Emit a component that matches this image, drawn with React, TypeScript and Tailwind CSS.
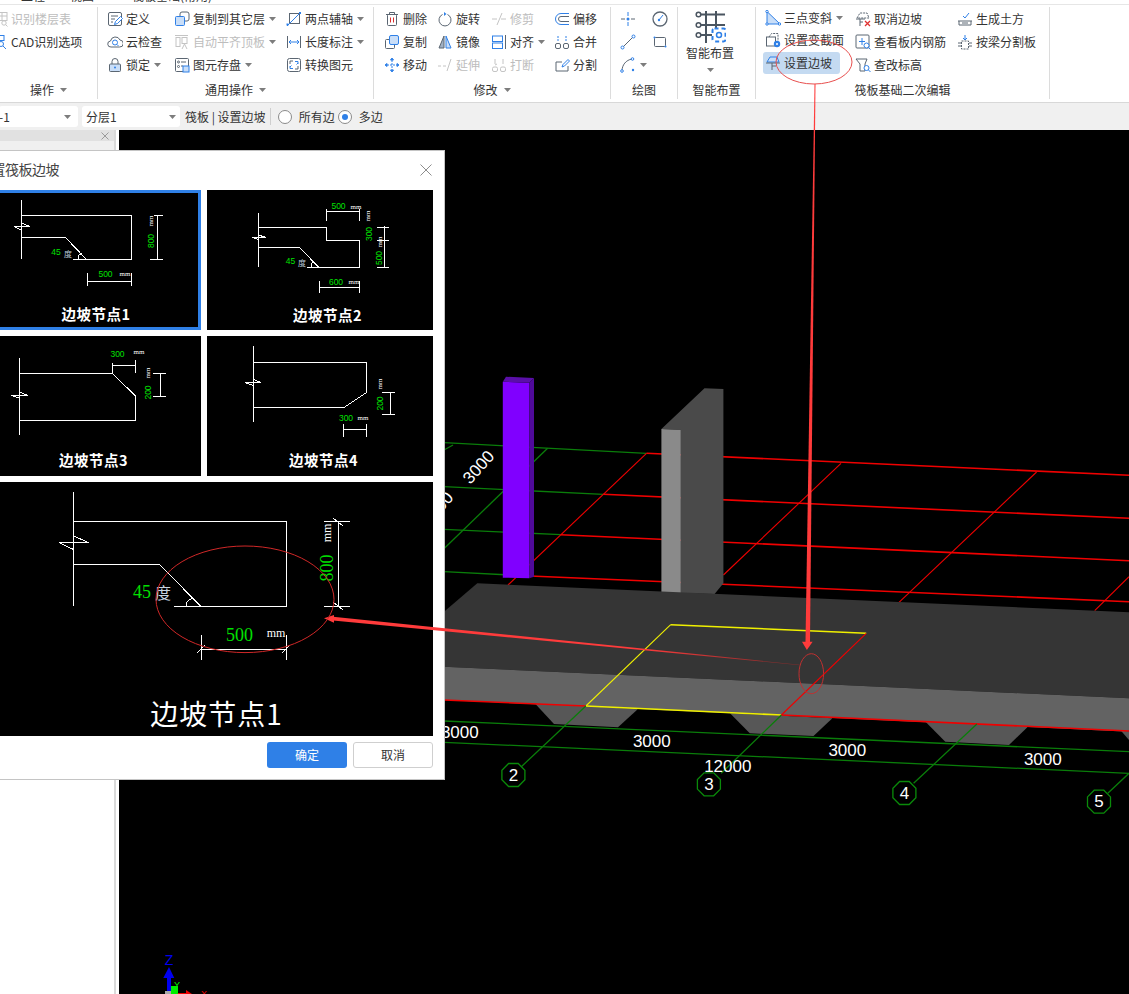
import React from 'react';

const D = '#5b6672';
const B = '#2f80e7';
const L = '#c9def8';
const G = '#c4c4c4';
const CJK = '"Noto Sans CJK SC", sans-serif';
const GREEN = '#00e000';

function Svg({ children, stroke = D }: { children: React.ReactNode; stroke?: string }) {
  return (
    <svg width="16" height="16" viewBox="0 0 16 16" fill="none" stroke={stroke} strokeWidth="1" className="shrink-0">
      {children}
    </svg>
  );
}

const Lens = ({ x = 11, y = 11 }: { x?: number; y?: number }) => (
  <g stroke={B}>
    <circle cx={x} cy={y} r="2.5" fill="#fff" />
    <path d={`M${x + 2} ${y + 2}l2 2`} />
  </g>
);

const icons: Record<string, React.ReactNode> = {
  floor: <Svg stroke={G}><rect x="6" y="1.5" width="9" height="8" /><path d="M6 5h9M10 1.5v8" /><circle cx="12" cy="12" r="2.2" /><path d="M13.5 13.5l2 2" /></Svg>,
  cad: <Svg stroke={B}><rect x="7" y="1.5" width="5" height="5" /><circle cx="9" cy="10" r="2.5" /><path d="M11 12l3 3" /><rect x="4" y="12" width="3" height="3" /></Svg>,
  define: <Svg><rect x="1.5" y="1.5" width="13" height="13" rx="1.5" /><path d="M4 5h7M4 8h4M4 11h2" /><path d="M7.5 13.5l1-3 5-5 2 2-5 5z" fill="#fff" stroke={B} /></Svg>,
  cloud: <Svg><path d="M4 13a3 3 0 0 1-.5-6 5 5 0 0 1 9.5-1 3.5 3.5 0 0 1-.5 7z" /><circle cx="8" cy="8.5" r="2.5" stroke={B} /><path d="M10 10.5l1.5 1.5" stroke={B} /></Svg>,
  lock: <Svg><path d="M5 7V4.5a3 3 0 0 1 6 0V7" /><rect x="2.5" y="7" width="11" height="7.5" rx="1" fill={L} /><circle cx="8" cy="10.5" r="1" fill={B} stroke="none" /></Svg>,
  copyTo: <Svg><rect x="6" y="1" width="9" height="9" rx="2" fill="#fff" /><rect x="1.5" y="5.5" width="9" height="9" rx="1" fill={L} stroke={B} /></Svg>,
  autoAlign: <Svg stroke={G}><path d="M1 1.5h13" /><rect x="2" y="3.5" width="4" height="9" /><rect x="8" y="3.5" width="5" height="6" /><path d="M8 15l2.5-5 2.5 5" /></Svg>,
  save: <Svg><rect x="1.5" y="1.5" width="13" height="13" rx="1" /><circle cx="4.5" cy="5" r="1" /><circle cx="4.5" cy="9.5" r="1" /><path d="M7 5h5M7 9h2" /><rect x="9" y="9" width="6" height="6" fill={L} stroke={B} /></Svg>,
  twoPoint: <Svg><rect x="3.5" y="2.5" width="10" height="10" /><path d="M1 15L15 1" stroke={B} /><rect x="0.5" y="12.5" width="2" height="2" fill={B} stroke="none" /><rect x="13" y="1" width="2" height="2" fill={B} stroke="none" /></Svg>,
  length: <Svg><path d="M1.5 2v12M14.5 2v12" /><path d="M3 8h10M5 6L3 8l2 2M11 6l2 2-2 2" stroke={B} /></Svg>,
  convert: <Svg><rect x="1.5" y="1.5" width="13" height="13" rx="2" /><path d="M4 7V4h3M12 9v3H9" /><path d="M9 4.5h3V7M10.5 7.5L12 6M7 11.5H4V9M5.5 8.5L4 10" stroke={B} /></Svg>,
  delete: <Svg><path d="M5.5 3V1.5h5V3M2 3.5h12" /><rect x="3.5" y="3.5" width="9" height="11" rx="1" /><path d="M6.5 6.5v5M9.5 6.5v5" stroke="#d83030" /></Svg>,
  rotate: <Svg><path d="M10.5 3.5a6 6 0 1 1-5 0" /><path d="M7 1l2.5 2L7 5z" fill={B} stroke="none" /></Svg>,
  trim: <Svg stroke={G}><path d="M1 8h5M10 8h5M11 2L6 14" /></Svg>,
  copy: <Svg><rect x="1.5" y="5.5" width="9" height="9" rx="1" fill="#fff" /><rect x="5.5" y="1.5" width="9" height="9" rx="1.5" fill={L} stroke={B} /></Svg>,
  mirror: <Svg><path d="M7 2L2 14h5z" fill="#9fb0c4" /><path d="M9 2l5 12H9z" fill={L} stroke={B} /></Svg>,
  extend: <Svg stroke={G}><path d="M1 9h3M6 9h3M14 2L10 14" /></Svg>,
  align: <Svg stroke={B}><rect x="1.5" y="2" width="10" height="5.5" /><rect x="1.5" y="9" width="10" height="5.5" /><path d="M14.5 1v14" stroke={D} /></Svg>,
  move: <Svg stroke={B}><path d="M8 3v10M3 8h10" strokeDasharray="2 1" /><path d="M6.5 3L8 1l1.5 2zM6.5 13L8 15l1.5-2zM3 6.5L1 8l2 1.5zM13 6.5L15 8l-2 1.5z" fill={B} /></Svg>,
  break: <Svg stroke={G}><rect x="1.5" y="10" width="5" height="4.5" rx="1.5" /><rect x="9.5" y="10" width="5" height="4.5" rx="1.5" /><path d="M4 2v5M12 2v5M6 7l-2 1" /></Svg>,
  offset: <Svg><path d="M15 2.5H7a5.5 5.5 0 0 0 0 11h8" stroke={B} /><path d="M15 5.5H7a2.5 2.5 0 0 0 0 5h8" /></Svg>,
  merge: <Svg><rect x="1.5" y="9.5" width="5" height="5" rx="1.5" /><rect x="9.5" y="9.5" width="5" height="5" rx="1.5" /><path d="M4 2v5M12 2v5" stroke={B} strokeDasharray="2 1" /></Svg>,
  split: <Svg><path d="M14 9v5H2V5h6" /><path d="M8 10l1-2.5 5-5 1.5 1.5-5 5z" stroke={B} /></Svg>,
  point: <Svg><path d="M1 8h4M11 8h4" /><path d="M8 1v4M8 11v4" stroke={B} /><circle cx="8" cy="8" r="1.5" fill={B} stroke="none" /></Svg>,
  circle: <Svg><circle cx="8" cy="8" r="7" strokeWidth="1.3" /><path d="M7 9l4-5" stroke={B} /><circle cx="7" cy="9" r="1.2" fill={B} stroke="none" /></Svg>,
  line: <Svg><path d="M3 13L13 3" /><circle cx="2.5" cy="13.5" r="1.5" fill="#fff" stroke={B} /><circle cx="13.5" cy="2.5" r="1.5" fill="#fff" stroke={B} /></Svg>,
  rect: <Svg><rect x="2.5" y="3.5" width="11" height="9" rx="1" /><circle cx="2.5" cy="3.5" r="1" fill={B} stroke="none" /><circle cx="13.5" cy="12.5" r="1" fill={B} stroke="none" /></Svg>,
  arc: <Svg><path d="M2 14C2 8 6 3 12 2" /><circle cx="2" cy="14" r="1.3" fill="#fff" stroke={B} /><circle cx="12.5" cy="2" r="1.3" fill="#fff" stroke={B} /><circle cx="13" cy="13" r="1.2" fill={B} stroke="none" /></Svg>,
  slope3: <Svg stroke={B}><path d="M2 1.5V14h13z" fill={L} /><circle cx="2" cy="1.5" r="1.2" fill="#fff" /><circle cx="2" cy="14" r="1.2" fill="#fff" /><circle cx="14.5" cy="14" r="1.2" fill="#fff" /></Svg>,
  section: <Svg><rect x="1.5" y="5" width="9" height="9" /><path d="M4 5l2.5-3.5H13V9" strokeDasharray="2 1" /><circle cx="12" cy="12" r="3.2" fill={B} stroke="none" /><circle cx="12" cy="12" r="1" fill="#fff" stroke="none" /></Svg>,
  slope: <Svg><path d="M2 7l3-5h7l2 5z" fill={L} stroke={B} /><path d="M1 8h14M7 8v7M7 11h4" /></Svg>,
  cancelSlope: <Svg><path d="M2 7l3-5h7l2 5z" strokeDasharray="2 1" /><path d="M1 8h9M5 8v7M5 11h3" /><path d="M10 10l5 5M15 10l-5 5" stroke="#e03030" strokeWidth="1.3" /></Svg>,
  rebar: <Svg><rect x="1" y="1" width="13" height="13" rx="1" /><path d="M7 4v7M4 7.5h6" stroke={B} /><Lens x={11.5} y={11.5} /></Svg>,
  elevation: <Svg><path d="M1 2h11l-2 5v7H5V7z" /><Lens x={11.5} y={11} /></Svg>,
  earth: <Svg><path d="M2 10v4h12v-4M1 10h14" /><path d="M5 12h6" /><path d="M6 5l2 2 4-5" stroke={B} /></Svg>,
  splitBeam: <Svg><path d="M1 9h3M12 9h3M1 12h3M12 12h3" /><rect x="4.5" y="7" width="7" height="8" strokeDasharray="2 1" /><path d="M8 1v5M6 4l2 2 2-2" stroke={B} /></Svg>,
};

function Caret() {
  return (
    <svg width="7" height="4" viewBox="0 0 7 4" className="shrink-0">
      <path d="M0 0h7L3.5 4z" fill="#7d7d7d" />
    </svg>
  );
}

interface ToolProps {
  icon?: string;
  label?: string;
  caret?: boolean;
  off?: boolean;
  active?: boolean;
}

function Tool({ icon, label, caret, off, active }: ToolProps) {
  return (
    <div className={`flex items-center h-[23px] gap-[3px] rounded-[3px] ${active ? 'bg-[#c4daf1] -mx-[2px] px-[2px] h-[19px] my-[2px] w-[77px]' : ''}`}>
      {icon && icons[icon]}
      {label && <span className={`text-[12px] leading-none whitespace-nowrap ${off ? 'text-[#bdbdbd]' : 'text-[#333]'}`}>{label}</span>}
      {caret && <span className="ml-[1px] flex"><Caret /></span>}
    </div>
  );
}

function Group({ width, label, caret, children }: { width: string; label: string; caret?: boolean; children: React.ReactNode }) {
  return (
    <div className={`${width} shrink-0 h-[92px] flex flex-col border-r border-[#dcdcdc]`}>
      <div className="flex h-[69px]">{children}</div>
      <div className="mt-[5px] h-[18px] flex items-center justify-center gap-[6px] text-[12px] text-[#333]">
        <span>{label}</span>
        {caret && <Caret />}
      </div>
    </div>
  );
}

function Radio({ checked }: { checked?: boolean }) {
  return (
    <span className="w-[14px] h-[14px] rounded-full border border-[#8a8a8a] bg-white flex items-center justify-center">
      {checked && <span className="w-[6px] h-[6px] rounded-full bg-[#2f80e7]" />}
    </span>
  );
}

function T({ x, y, size = 8.5, fill = GREEN, rot, family = '"Liberation Sans", sans-serif', bold, spacing, children }: {
  x: number; y: number; size?: number; fill?: string; rot?: number; family?: string; bold?: boolean; spacing?: number; children: React.ReactNode;
}) {
  return (
    <text
      x={x}
      y={y}
      fontSize={size}
      fill={fill}
      stroke="none"
      fontFamily={family}
      fontWeight={bold ? 700 : 400}
      letterSpacing={spacing}
      textAnchor="middle"
      dominantBaseline="central"
      transform={rot !== undefined ? `rotate(${rot} ${x} ${y})` : undefined}
    >
      {children}
    </text>
  );
}

function Thumb({ box, label, lx, ly, selected, children }: {
  box: string; label: string; lx: number; ly: number; selected?: boolean; children: React.ReactNode;
}) {
  return (
    <div className="relative h-[140px] bg-black">
      <svg width="226" height="140" viewBox={box} className="block">
        <g stroke="#fff" strokeWidth="1" fill="none" shapeRendering="crispEdges">{children}</g>
        <T x={lx} y={ly} size={14.5} fill="#fff" family={CJK} bold spacing={0.5}>{label}</T>
      </svg>
      {selected && <div className="absolute inset-0 border-[3px] border-[#2f80e7]" />}
    </div>
  );
}

const mm = (x: number, y: number, rot?: number, size = 7) => <T x={x} y={y} size={size} fill="#fff" rot={rot} family='"Liberation Serif", serif'>mm</T>;

function Dialog() {
  return (
    <div className="absolute left-[-36px] top-[150px] w-[481px] h-[630px] bg-white border border-[#c4c4c4]">
      <div className="h-[39px] flex items-center justify-between pl-[13px] pr-[12px] pb-[2px]">
        <span className="text-[14px] text-[#444] tracking-[-0.5px]">设置筏板边坡</span>
        <svg width="12" height="12" viewBox="0 0 12 12" stroke="#8d8d8d" strokeWidth="1"><path d="M0.5 0.5l11 11M11.5 0.5l-11 11" /></svg>
      </div>
      <div className="grid grid-cols-[226px_226px] gap-[6px] pl-[10px]">
        <Thumb box="-25 190 226 140" label="边坡节点1" lx={96} ly={313} selected>
          <path d="M21.5 200v59M21.5 215.5H131.5V259.5H73M21.5 237.5H65.5L86.5 259.5" />
          <path d="M14 226.5H30M14 226.5l7.5 3.5M21.5 223l8.500 3.500M78 259.5v-4l4-2.500" />
          <path d="M157.5 215.5v44M154 215.5h9M150 259.5h13M87.5 273v13M131.5 273v13M87.5 281.5h44" />
          <T x={151} y={241} rot={-90}>800</T>
          {mm(151, 221, -90)}
          <T x={56} y={252}>45</T>
          <T x={68} y={253} size={8} fill="#b8c8d8" family={CJK}>度</T>
          <T x={105.5} y={274}>500</T>
          {mm(125, 274)}
        </Thumb>
        <Thumb box="207 190 226 140" label="边坡节点2" lx={327.5} ly={314}>
          <path d="M258.5 213v54M258.5 227.5H326.5V240.5H359.5V267.5H307M258.5 247.5H299.5L319 267.5" />
          <path d="M252 237.5H266M252 237.5l6.5 2M258.5 235l7.5 2.500M311 267.5v-4l3-2" />
          <path d="M326.5 209v12M359.5 209v12M326.5 211.5h33M384 226v41M377 227.5h12M377 240.5h12M377 267.5h12M319.5 281v12M359.5 281v12M319.5 287.5h40" />
          <T x={338.5} y={206}>500</T>
          {mm(356, 207)}
          {mm(368, 216, -90)}
          <T x={368.5} y={234} rot={-90}>300</T>
          {mm(380, 242, -90)}
          <T x={379} y={258} rot={-90}>500</T>
          <T x={290.5} y={261}>45</T>
          <T x={302} y={262} size={8} fill="#b8c8d8" family={CJK}>度</T>
          <T x={336} y={282}>600</T>
          {mm(354, 282)}
        </Thumb>
        <Thumb box="-25 336 226 140" label="边坡节点3" lx={93.5} ly={459.5}>
          <path d="M19.5 358v77M19.5 373.5H112.5L135.5 396V420.5H19.5" />
          <path d="M11 395.5H28M11 395.5l8.5 2.500M19.5 392l8.500 3.500" />
          <path d="M112.5 363v10M135.5 360v13M112.5 365.5h23M160.5 373.5v23M153 373.5h13M153 396.5h13" />
          <T x={117.5} y={353.5}>300</T>
          {mm(139, 352)}
          {mm(148, 373, -90)}
          <T x={148} y={392.5} rot={-90}>200</T>
        </Thumb>
        <Thumb box="207 336 226 140" label="边坡节点4" lx={323.5} ly={459.5}>
          <path d="M253.5 346v76M253.5 362.5H366.5V392.5L344 407.5H253.5" />
          <path d="M245 382.5H261M245 382.5l8.5 3M253.5 379.5l7.500 3" />
          <path d="M390.5 392.5v22M382 392.5h13M382 414.5h13M343.5 424v13M366.5 424v13M343.5 429.5h23" />
          {mm(379.5, 384, -90)}
          <T x={379.5} y={403.5} rot={-90}>200</T>
          <T x={346} y={417.5}>300</T>
          {mm(363, 418)}
        </Thumb>
        <div className="col-span-2 h-[254px] bg-black">
          <svg width="458" height="254" viewBox="-25 482 458 254" className="block">
            <g stroke="#fff" strokeWidth="1" fill="none" shapeRendering="crispEdges">
              <path d="M73.5 492v114M73.5 521.5H286.5V606.5H174M73.5 564.5H159.5L201 606.5" />
              <path d="M59 542.5H89M59 542.5l14.5 7M73.5 536l15 6.500M186 606.5a8 8 0 0 1 6-8" />
              <path d="M338.5 521.5v85M324 521.5h26M324 606.5h26M333 518l10 8M333 602l10 8" />
              <path d="M201.5 635v25M286.5 635v25M201.5 649.5h85M197 653l8-8M282 653l8-8" />
            </g>
            <T x={142} y={592} size={18} family='"Liberation Serif", serif'>45</T>
            <T x={163} y={592} size={16} fill="#c8d4e0" family={CJK}>度</T>
            <T x={327} y={568} size={18} rot={-90} family='"Liberation Serif", serif'>800</T>
            <T x={327} y={533} size={12} fill="#fff" rot={-90} family='"Liberation Serif", serif'>mm</T>
            <T x={239.5} y={635} size={18} family='"Liberation Serif", serif'>500</T>
            <T x={276} y={633} size={12} fill="#fff" family='"Liberation Serif", serif'>mm</T>
            <T x={216.5} y={712.5} size={28} fill="#fff" family={CJK} spacing={1}>边坡节点1</T>
          </svg>
        </div>
      </div>
      <div className="flex justify-end gap-[6px] pr-[11px] mt-[6px]">
        <button className="w-[80px] h-[26px] rounded-[3px] bg-[#2f80e7] text-white text-[12px]">确定</button>
        <button className="w-[80px] h-[26px] rounded-[3px] bg-white border border-[#cfcfcf] text-[#333] text-[12px]">取消</button>
      </div>
    </div>
  );
}

const greenLines = [
  'M444 442.7L646.5 453.3',
  'M444 486.7L603.4 494.3',
  'M444 529.3L560.8 534.7',
  'M444 571.7L530 576',
  'M547.6 448.3L444.4 548.3',
  'M453 445L444 450',
];

const redRows = [
  'M646.5 453.3L1129 475.3',
  'M603.4 494.3L1129 518.3',
  'M560.8 534.7L1129 560.7',
  'M530 576L1129 601.7',
];

const redCols = [
  'M646.5 453.3L508 585',
  'M841 463.3L723.4 575',
  'M1036.6 472L899 602.3',
  'M1129 576.7L1094.7 610.7',
];

const axisMarks = [
  { n: '2', x: 513.4, y: 775 },
  { n: '3', x: 708.9, y: 784.3 },
  { n: '4', x: 904.4, y: 793 },
  { n: '5', x: 1099, y: 801.7 },
];

const octagon = (x: number, y: number) => {
  const pts: string[] = [];
  for (let i = 0; i < 8; i++) {
    const a = Math.PI / 8 + (i * Math.PI) / 4;
    pts.push(`${(x + 12.5 * Math.cos(a)).toFixed(1)},${(y + 12.5 * Math.sin(a)).toFixed(1)}`);
  }
  return pts.join(' ');
};

function Scene() {
  return (
    <svg width="1010" height="864" viewBox="119 130 1010 864" className="block">
      <g fill="none">
        {greenLines.map((d) => <path key={d} d={d} stroke="#0a7d0a" strokeWidth="1.3" />)}
        {redRows.map((d) => <path key={d} d={d} stroke="#f00000" strokeWidth="1.6" />)}
        {redCols.map((d) => <path key={d} d={d} stroke="#f00000" strokeWidth="1.1" />)}
      </g>

      <T x={478.7} y={467.3} size={17} fill="#fff" rot={-48}>3000</T>
      <T x={437.6} y={508.6} size={17} fill="#fff" rot={-48}>3000</T>

      <polygon points="502.8,381.7 529.2,382.7 529.2,578.3 502.8,577.7" fill="#8000ff" />
      <polygon points="502.8,381.7 506,376.7 534,378 529.2,382.7" fill="#5a0fa8" />
      <polygon points="529.2,382.7 534,378 534,576.7 529.2,578.3" fill="#4f0a9a" />

      <polygon points="680.8,430 661.4,429 704.5,388.3 723.4,389 723.4,583.3 714.6,594 680.8,593.3" fill="#4a4a4a" />
      <polygon points="661.4,429 680.8,430 680.8,593.3 661.4,592.7" fill="#8a8a8a" />

      <polygon points="534.5,703 637.7,709.3 618,727.3 554,724" fill="#575757" />
      <polygon points="730,713.3 832.4,718.3 813.5,736 749.8,733.3" fill="#575757" />
      <polygon points="925.5,721.7 1027.9,726.7 1009,745 945.3,741.7" fill="#575757" />
      <polygon points="1121,730.7 1129,731.7 1129,740" fill="#575757" />

      <polygon points="477.3,583.3 1129,612.3 1129,698.3 444,666.7 444,611.7" fill="#353535" />
      <polygon points="444,666.7 1129,698.3 1129,731.7 444,700" fill="#636363" />

      <path d="M670.7 624.7L866.2 633.3M585.9 706L781.4 715" fill="none" stroke="#f0f000" strokeWidth="1.6" />
      <path d="M670.7 624.7L585.9 706" fill="none" stroke="#f0f000" strokeWidth="1.1" />
      <path d="M866.2 633.3L781.4 715" fill="none" stroke="#f00000" strokeWidth="1.1" />
      <path d="M444 700L585.9 706M781.4 715L1129 731" fill="none" stroke="#f00000" strokeWidth="1.6" />

      <g fill="none" stroke="#0a7d0a" strokeWidth="1.3">
        <path d="M444 721L1129 751.7M444 742.3L1129 773.3" />
        <path d="M585.9 706L521.3 766.7M781.4 715L721.2 773.3M976.9 724L913.6 783.3M1129 773.3L1107.8 793.3" />
      </g>

      {axisMarks.map((m) => (
        <g key={m.n}>
          <polygon points={octagon(m.x, m.y)} fill="#000" stroke="#0a8a0a" strokeWidth="1.3" />
          <T x={m.x} y={m.y} size={17} fill="#fff">{m.n}</T>
        </g>
      ))}

      <T x={459.8} y={732.7} size={17} fill="#fff">3000</T>
      <T x={651.8} y={741} size={17} fill="#fff">3000</T>
      <T x={847.3} y={750} size={17} fill="#fff">3000</T>
      <T x={1042.8} y={759} size={17} fill="#fff">3000</T>
      <T x={727.8} y={766} size={17} fill="#fff">12000</T>

      <polygon points="167,994 167,978 163.3,978 169,967 174.3,978 171,978 171,994" fill="#0000f0" />
      <T x={169} y={960} size={14} fill="#0000f0">Z</T>
      <rect x="165" y="991" width="6" height="3" fill="#a8a8a8" />
      <rect x="171" y="986" width="7" height="8" fill="#00ee00" />
      <T x={177} y={985} size={9} fill="#00ee00">Y</T>
      <rect x="178" y="993" width="8" height="1" fill="#f00000" />
      <polygon points="186,994 186,990 192,994" fill="#f00000" />
      <T x={204} y={994} size={9} fill="#f00000">X</T>
    </svg>
  );
}

function Annotations() {
  return (
    <svg width="1129" height="994" viewBox="0 0 1129 994" className="absolute inset-0 pointer-events-none">
      <defs>
        <linearGradient id="fade" x1="333" y1="0" x2="800" y2="0" gradientUnits="userSpaceOnUse">
          <stop offset="0" stopColor="#ff3b3b" />
          <stop offset="0.65" stopColor="#ff3b3b" />
          <stop offset="1" stopColor="#7a2a2a" />
        </linearGradient>
      </defs>
      <ellipse cx="814" cy="62" rx="38" ry="22" fill="none" stroke="#e8504f" strokeWidth="1" />
      <polygon points="814.5,84 815.5,84 810,642 805.5,642" fill="#ff3b3b" />
      <polygon points="802,641.7 812.6,641.7 806.9,650" fill="#ff3b3b" />
      <ellipse cx="811.3" cy="673.7" rx="12.3" ry="20" fill="none" stroke="#c03030" strokeWidth="1" />
      <polygon points="333,616.7 800,664.8 800,665.2 333,620.5" fill="url(#fade)" />
      <polygon points="324,618.3 334,615 334,622.7" fill="#ff3b3b" />
      <ellipse cx="245" cy="599.3" rx="89" ry="53.3" fill="none" stroke="#d02828" strokeWidth="1" />
    </svg>
  );
}

export default function App() {
  return (
    <div className="relative w-[1129px] h-[994px] overflow-hidden bg-white flex flex-col font-['Noto_Sans_CJK_SC',sans-serif]">
      {/* clipped tab strip */}
      <div className="h-[5px] overflow-hidden border-b border-[#e6e6e6] flex text-[12px] text-[#333] leading-none">
        <span className="ml-[21px] -mt-[10px]">工程</span>
        <span className="ml-[25px] -mt-[10px]">视图</span>
        <span className="ml-[38px] -mt-[10px]">筏板基础(常用)</span>
      </div>

      {/* ribbon */}
      <div className="h-[98px] pt-[2px] flex border-b border-[#d8d8d8] bg-white">
        <Group width="w-[98px]" label="操作" caret>
          <div className="-ml-[8px] flex flex-col">
            <Tool icon="floor" label="识别楼层表" off />
            <Tool icon="cad" label="CAD识别选项" />
          </div>
        </Group>
        <Group width="w-[276px]" label="通用操作" caret>
          <div className="w-[67px] ml-[9px] flex flex-col">
            <Tool icon="define" label="定义" />
            <Tool icon="cloud" label="云检查" />
            <Tool icon="lock" label="锁定" caret />
          </div>
          <div className="w-[112px] flex flex-col">
            <Tool icon="copyTo" label="复制到其它层" caret />
            <Tool icon="autoAlign" label="自动平齐顶板" caret off />
            <Tool icon="save" label="图元存盘" caret />
          </div>
          <div className="w-[87px] flex flex-col">
            <Tool icon="twoPoint" label="两点辅轴" caret />
            <Tool icon="length" label="长度标注" caret />
            <Tool icon="convert" label="转换图元" />
          </div>
        </Group>
        <Group width="w-[237px]" label="修改" caret>
          <div className="w-[53px] ml-[10px] flex flex-col">
            <Tool icon="delete" label="删除" />
            <Tool icon="copy" label="复制" />
            <Tool icon="move" label="移动" />
          </div>
          <div className="w-[54px] flex flex-col">
            <Tool icon="rotate" label="旋转" />
            <Tool icon="mirror" label="镜像" />
            <Tool icon="extend" label="延伸" off />
          </div>
          <div className="w-[63px] flex flex-col">
            <Tool icon="trim" label="修剪" off />
            <Tool icon="align" label="对齐" caret />
            <Tool icon="break" label="打断" off />
          </div>
          <div className="w-[50px] flex flex-col">
            <Tool icon="offset" label="偏移" />
            <Tool icon="merge" label="合并" />
            <Tool icon="split" label="分割" />
          </div>
        </Group>
        <Group width="w-[67px]" label="绘图">
          <div className="w-[32px] ml-[9px] flex flex-col">
            <Tool icon="point" />
            <Tool icon="line" />
            <Tool icon="arc" caret />
          </div>
          <div className="flex flex-col">
            <Tool icon="circle" />
            <Tool icon="rect" />
          </div>
        </Group>
        <Group width="w-[78px]" label="智能布置">
          <div className="w-[64px] flex flex-col items-center">
            <svg width="31" height="32" viewBox="0 0 31 32" fill="none" className="mt-[4px] shrink-0">
              <g stroke="#4a5560" strokeWidth="2">
                <path d="M6 3.5H30M6 14H30M6 24H17M11 0V32M21 0V17" />
                <circle cx="3.5" cy="3.5" r="2.3" strokeWidth="1.5" />
                <circle cx="3.5" cy="14" r="2.3" strokeWidth="1.5" />
                <circle cx="3.5" cy="24" r="2.3" strokeWidth="1.5" />
              </g>
              <rect x="17.5" y="17.5" width="13" height="13" rx="2" stroke={B} strokeWidth="2" strokeDasharray="4 3" fill="#fff" />
              <circle cx="24" cy="24" r="2.5" stroke={B} strokeWidth="1.5" />
            </svg>
            <span className="text-[12px] text-[#333] leading-none mt-[4px]">智能布置</span>
            <span className="mt-[9px] flex"><Caret /></span>
          </div>
        </Group>
        <Group width="w-[294px]" label="筏板基础二次编辑">
          <div className="w-[90px] ml-[9px] flex flex-col">
            <Tool icon="slope3" label="三点变斜" caret />
            <Tool icon="section" label="设置变截面" />
            <Tool icon="slope" label="设置边坡" active />
          </div>
          <div className="w-[102px] flex flex-col">
            <Tool icon="cancelSlope" label="取消边坡" />
            <Tool icon="rebar" label="查看板内钢筋" />
            <Tool icon="elevation" label="查改标高" />
          </div>
          <div className="flex flex-col">
            <Tool icon="earth" label="生成土方" />
            <Tool icon="splitBeam" label="按梁分割板" />
          </div>
        </Group>
      </div>

      {/* option bar */}
      <div className="h-[27px] bg-[#f0f0f0] flex items-center text-[12px] text-[#333]">
        <div className="w-[79px] h-[21px] -ml-px bg-white rounded-[3px] flex items-center justify-between pr-[7px]">
          <span>-1</span>
          <Caret />
        </div>
        <div className="w-[98px] h-[21px] ml-[4px] bg-white rounded-[3px] flex items-center justify-between pl-[4px] pr-[4px]">
          <span>分层1</span>
          <Caret />
        </div>
        <span className="ml-[5px] whitespace-nowrap">筏板 | 设置边坡</span>
        <span className="ml-[4px] w-px h-[17px] bg-[#cfcfcf]" />
        <span className="ml-[7px] flex"><Radio /></span>
        <span className="ml-[7px]">所有边</span>
        <span className="ml-[3px] flex"><Radio checked /></span>
        <span className="ml-[7px]">多边</span>
      </div>

      {/* body */}
      <div className="flex-1 flex">
        <div className="w-[119px] flex bg-white">
          <div className="w-[114px] flex flex-col">
            <div className="h-[11px] bg-[#e1e1e1] flex justify-end items-center pr-[5px]">
              <svg width="8" height="8" viewBox="0 0 8 8" stroke="#9a9a9a" strokeWidth="1"><path d="M0.5 0.5l7 7M7.5 0.5l-7 7" /></svg>
            </div>
            <div className="h-[9px] bg-[#f0f0f0]" />
          </div>
          <div className="w-[2px] bg-[#d9d9d9]" />
        </div>
        <div className="flex-1 bg-black overflow-hidden">
          <Scene />
        </div>
      </div>

      <Dialog />
      <Annotations />
    </div>
  );
}
